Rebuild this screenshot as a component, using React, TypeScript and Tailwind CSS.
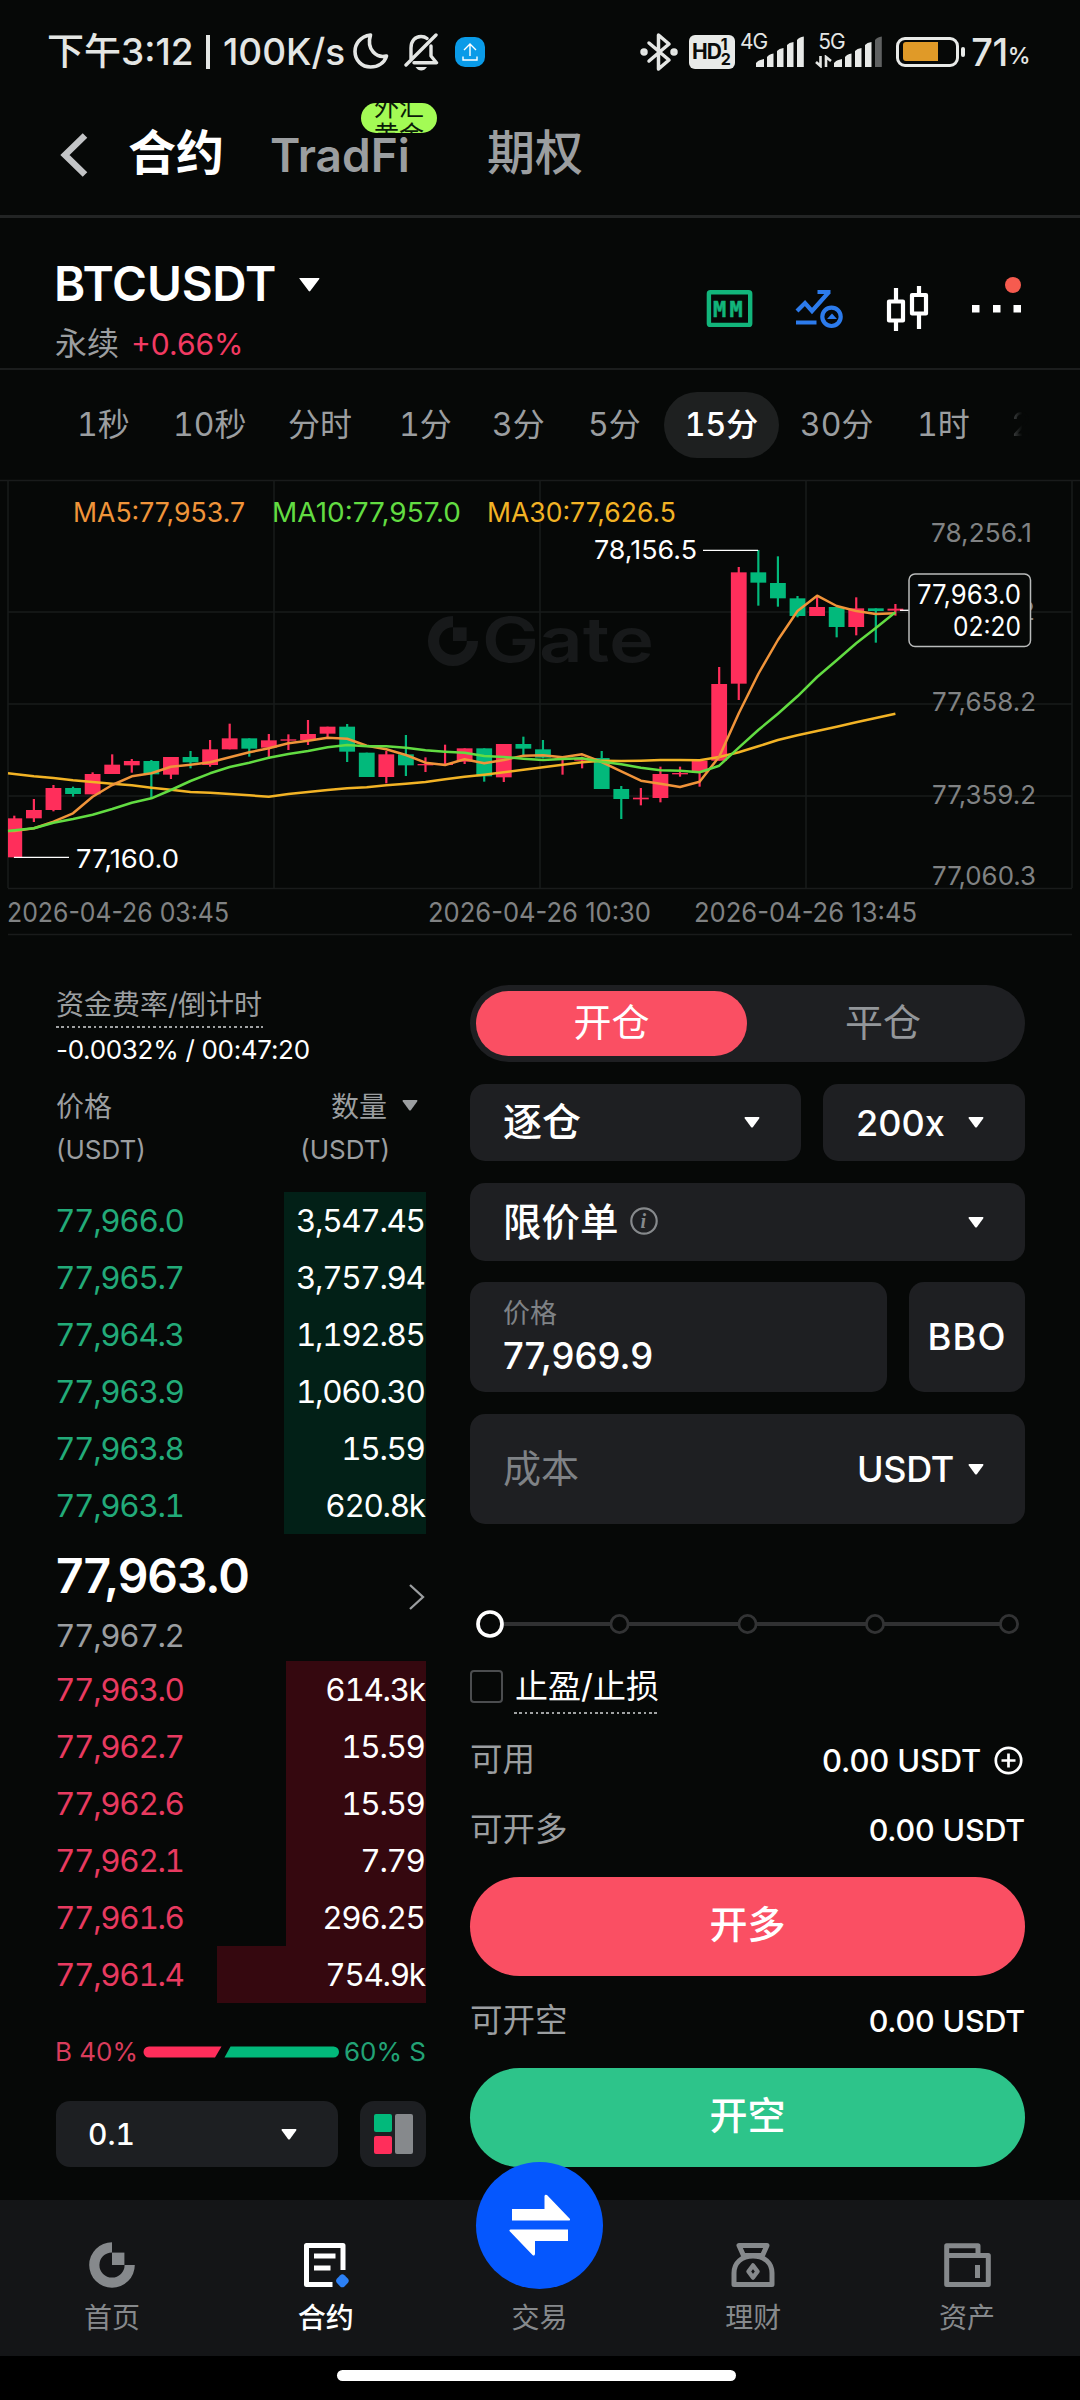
import React from "react";

type Dir = "up" | "down";
type Candle = [high: number, top: number, bottom: number, low: number, dir: Dir];

/* Pixel rows inside the chart, measured in thirds of a pixel. */
const CANDLES: Candle[] = [
  [1037, 1045, 1162, 1162, "up"],
  [987, 1020, 1045, 1056, "up"],
  [945, 954, 1020, 1024, "up"],
  [950, 954, 972, 980, "down"],
  [907, 912, 973, 973, "up"],
  [853, 884, 912, 912, "up"],
  [867, 873, 886, 908, "up"],
  [870, 873, 913, 985, "down"],
  [861, 861, 914, 927, "up"],
  [843, 861, 877, 895, "down"],
  [810, 838, 885, 890, "up"],
  [761, 805, 838, 838, "up"],
  [805, 805, 836, 860, "down"],
  [792, 811, 833, 867, "up"],
  [793, 808, 812, 840, "up"],
  [750, 792, 810, 825, "up"],
  [770, 770, 791, 803, "up"],
  [762, 770, 845, 876, "down"],
  [848, 848, 921, 921, "down"],
  [843, 853, 921, 940, "up"],
  [795, 853, 886, 918, "down"],
  [862, 882, 886, 906, "up"],
  [824, 881, 885, 888, "up"],
  [835, 835, 875, 882, "up"],
  [835, 835, 919, 935, "down"],
  [822, 822, 922, 936, "up"],
  [800, 822, 836, 860, "down"],
  [810, 838, 863, 865, "down"],
  [862, 864, 868, 914, "up"],
  [860, 866, 872, 895, "up"],
  [843, 864, 957, 957, "down"],
  [948, 957, 987, 1047, "down"],
  [954, 983, 988, 1006, "up"],
  [890, 912, 984, 997, "up"],
  [890, 909, 913, 920, "up"],
  [872, 872, 907, 950, "up"],
  [591, 642, 872, 872, "up"],
  [291, 307, 641, 690, "up"],
  [240, 307, 338, 407, "down"],
  [259, 339, 385, 410, "down"],
  [378, 385, 438, 442, "down"],
  [380, 411, 438, 438, "up"],
  [411, 411, 471, 502, "down"],
  [382, 415, 471, 496, "up"],
  [415, 415, 423, 518, "down"],
  [402, 416, 422, 437, "up"],
];

const MA5 = [1083, 1075, 1055, 1030, 980, 945, 919, 910, 890, 884, 877, 862, 847, 835, 820, 812, 803, 806, 827, 838, 855, 878, 885, 868, 880, 870, 857, 856, 862, 853, 876, 904, 932, 941, 951, 935, 860, 730, 612, 510, 423, 377, 408, 423, 432, 430];
const MA10 = [1081, 1075, 1058, 1047, 1034, 1017, 998, 985, 960, 933, 910, 891, 878, 863, 852, 843, 832, 825, 829, 829, 833, 841, 845, 848, 858, 861, 866, 870, 867, 865, 875, 883, 893, 901, 902, 907, 887, 833, 780, 731, 679, 621, 571, 520, 474, 427];
const MA30 = [912, 919, 924, 931, 936, 941, 946, 953, 959, 966, 968, 972, 976, 980, 972, 966, 960, 955, 952, 946, 941, 936, 928, 920, 914, 907, 899, 892, 884, 877, 872, 873, 872, 870, 870, 871, 861, 847, 829, 810, 796, 783, 770, 757, 744, 731];

const cx = (i: number) => 14.3 + 19.58 * i;
const cy = (v: number) => v / 3;
const line = (first: number, data: number[]) =>
  `8,${cy(first).toFixed(1)} ` + data.map((v, i) => `${cx(i).toFixed(1)},${cy(v).toFixed(1)}`).join(" ");

const RED = "#ff2e5b";
const GREEN = "#02b97b";
const SANS = "Inter, 'Noto Sans CJK SC', sans-serif";

function ChartText({ x, y, w, size, fill, children }: { x: number; y: number; w: number; size: number; fill: string; children: string }) {
  return (
    <text x={x} y={y + size * 0.364} fontSize={size} fill={fill} textLength={w} lengthAdjust="spacingAndGlyphs">
      {children}
    </text>
  );
}

function GateMark({ className, r }: { className: string; r: number }) {
  return (
    <svg className={className} width={r * 2} height={r * 2} viewBox="-23 -23 46 46" fill="currentColor">
      <path d="M0-22.8A22.8 22.8 0 1 0 22.8 0H12.6A12.6 12.6 0 1 1 0-12.6Z" />
      <rect x="0" y="-12.4" width="12.4" height="12.4" />
    </svg>
  );
}

function Chart() {
  return (
    <svg width="1080" height="466" viewBox="0 0 1080 466" fontFamily={SANS} className="block">
      <g stroke="#191b1b" strokeWidth="1.5">
        <path d="M0 10.5H1080M8 142H1072M8 234H1072M8 326H1072M8 418.5H1072M8 464.5H1072" />
        <path d="M8 10V418M274 10V418M540 10V418M806 10V418M1072 10V418" />
      </g>
      <g fill="#17191a">
        <g transform="translate(453 171) scale(1.1)">
          <path d="M0-22.8A22.8 22.8 0 1 0 22.8 0H12.6A12.6 12.6 0 1 1 0-12.6Z" />
          <rect x="0" y="-12.4" width="12.4" height="12.4" />
        </g>
        <text x="482" y="192" fontSize="62" fontWeight="600" textLength="172" lengthAdjust="spacingAndGlyphs">
          Gate
        </text>
      </g>
      <ChartText x={931} y={62.5} w={101} size={26} fill="#808283">78,256.1</ChartText>
      <ChartText x={932} y={141} w={103} size={26} fill="#808283">77,957.2</ChartText>
      <ChartText x={932} y={232} w={104} size={26} fill="#808283">77,658.2</ChartText>
      <ChartText x={932} y={324.5} w={104} size={26} fill="#808283">77,359.2</ChartText>
      <ChartText x={932} y={405.5} w={104} size={26} fill="#808283">77,060.3</ChartText>
      {CANDLES.map(([high, top, bottom, low, dir], i) => {
        const x = cx(i);
        const left = Math.max(8, x - 7.9);
        return (
          <g key={i} fill={dir === "up" ? RED : GREEN}>
            <rect x={x - 1.1} y={cy(high)} width="2.2" height={cy(low - high)} />
            <rect x={left} y={cy(top)} width={x + 7.9 - left} height={cy(bottom - top)} />
          </g>
        );
      })}
      <g fill="none" strokeWidth="2.5" strokeLinejoin="round">
        <polyline points={line(910, MA30)} stroke="#f2b325" />
        <polyline points={line(1083, MA5)} stroke="#f0943a" />
        <polyline points={line(1083, MA10)} stroke="#62dc42" />
      </g>
      <path d="M703 80.3H758M14 387.3H69" stroke="#fff" strokeWidth="1.3" />
      <ChartText x={594} y={80} w={103} size={26} fill="#fff">78,156.5</ChartText>
      <ChartText x={76} y={388.5} w={103} size={26} fill="#fff">77,160.0</ChartText>
      <ChartText x={73} y={42.5} w={172} size={26.5} fill="#f0943a">MA5:77,953.7</ChartText>
      <ChartText x={272} y={42.5} w={189} size={26.5} fill="#62dc42">MA10:77,957.0</ChartText>
      <ChartText x={487} y={42.5} w={189} size={26.5} fill="#f2b325">MA30:77,626.5</ChartText>
      <path d="M900 140.3H909" stroke="#fff" strokeWidth="1.3" />
      <rect x="909" y="104" width="121.5" height="72.5" rx="6" fill="#060807" stroke="#b9bbbb" strokeWidth="1.5" />
      <ChartText x={917} y={124.5} w={104} size={26.5} fill="#fff">77,963.0</ChartText>
      <ChartText x={953} y={156.5} w={68} size={26.5} fill="#fff">02:20</ChartText>
      <ChartText x={7} y={442.5} w={222} size={26.5} fill="#808283">2026-04-26 03:45</ChartText>
      <ChartText x={428} y={442.5} w={223} size={26.5} fill="#808283">2026-04-26 10:30</ChartText>
      <ChartText x={694} y={442.5} w={223} size={26.5} fill="#808283">2026-04-26 13:45</ChartText>
    </svg>
  );
}

function Triangle({ className = "" }: { className?: string }) {
  return (
    <svg width="16" height="11" viewBox="0 0 16 11" fill="currentColor" className={"shrink-0 " + className}>
      <path d="M1.2 0H14.8Q16 .3 15.2 1.5L9 10Q8 11 7 10L.8 1.5Q0 .3 1.2 0Z" />
    </svg>
  );
}

function Bars({ gray }: { gray?: boolean }) {
  return (
    <svg width="49" height="31" viewBox="0 0 49 31" fill="#e8eae8">
      <path d="M0 31V27Q2 24 8 23V31ZM11 31V21Q13 18 17.5 17.5V31ZM21 31V15Q23 12.5 27.5 12V31ZM31 31V9Q33 6.5 37.5 6V31Z" />
      <path d="M41 31V4Q43 1 47.8 .5V31Z" fill={gray ? "#5f6161" : "#e8eae8"} />
    </svg>
  );
}

function StatusBar() {
  return (
    <div className="flex h-[103px] items-center pl-[47px] text-[37px] leading-none font-medium text-[#e4e6e4]">
      <span className="w-[156px] whitespace-nowrap">下午3:12</span>
      <span className="ml-[3px] h-[34px] w-[4px] bg-[#e4e6e4]" />
      <span className="ml-[13px] w-[129px] whitespace-nowrap">100K/s</span>
      <svg width="36" height="36" viewBox="0 0 36 36" fill="none" stroke="currentColor" strokeWidth="3.6" strokeLinejoin="round" className="relative -top-px left-px">
        <path d="M17.5 2C7 3.5 2 11 2 18.5C2 27.5 9 34 17.5 34C25 34 31.5 30 33.5 23C24 25.5 13 17 17.5 2Z" />
      </svg>
      <svg width="38" height="38" viewBox="0 0 38 38" fill="none" stroke="currentColor" strokeWidth="3.4" className="ml-[15px]">
        <path d="M3 32L33 2M8 27V15C8 8 12 3.5 18 3.5C20.5 3.5 22.5 4.2 24 5.5M28 13V23L33.5 29.8H11" strokeLinejoin="round" strokeLinecap="round" />
        <path d="M12.5 34H24Q21.5 37.5 18.2 37.5Q15 37.5 12.5 34Z" fill="currentColor" stroke="none" />
      </svg>
      <span className="ml-[14px] flex h-[30px] w-[30px] items-center justify-center rounded-[10px] bg-[#0a9be8]">
        <svg width="18" height="20" viewBox="0 0 18 20" fill="none" stroke="#fff" strokeWidth="1.4">
          <path d="M9 14V2M3 8L9 2L15 8M2 14.5V18H16V14.5" />
        </svg>
      </span>
      <svg width="38" height="40" viewBox="0 0 38 40" fill="none" stroke="currentColor" strokeWidth="3.5" strokeLinejoin="round" strokeLinecap="round" className="ml-[155px]">
        <path d="M9 11L29 28L18.5 37V3L29 12L9 29" />
        <circle cx="4" cy="20" r="2" />
        <circle cx="34" cy="20" r="2" />
      </svg>
      <span className="ml-[11px] flex h-[34px] w-[46px] items-center rounded-[6px] bg-[#e8eae8] pl-[3px] font-bold text-[#0a0c0b]">
        <span className="text-[21px] tracking-[-1px]">HD</span>
        <span className="flex flex-col text-[16px] leading-[15px]">
          <span>1</span>
          <span>2</span>
        </span>
      </span>
      <span className="ml-[5px] self-start pt-[31px] text-[21px] leading-[22px] font-normal tracking-[-1px]">4G</span>
      <span className="-ml-[11px]"><Bars /></span>
      <span className="relative ml-[10px] h-[36px] w-[20px]">
        <span className="absolute -top-[3px] left-[3px] text-[21px] leading-[22px] font-normal tracking-[-1px]">5G</span>
        <svg width="17" height="13" viewBox="0 0 17 13" fill="none" stroke="currentColor" strokeWidth="2.6" className="absolute top-[21px] left-0">
          <path d="M1 7L5.5 11V1M11 12V2L16 6" />
        </svg>
      </span>
      <span className="-ml-px"><Bars gray /></span>
      <span className="ml-[13px] flex h-[30px] w-[63px] items-center rounded-[9px] border-[3px] border-[#e8eae8] pl-[4px]">
        <span className="h-[19px] w-[35px] rounded-l-[3px] bg-[#e09a28]" />
      </span>
      <span className="ml-[2px] h-[10px] w-[4px] rounded-[2px] bg-[#e8eae8]" />
      <span className="ml-[6px] text-[38px] tracking-[-0.5px]">71</span>
      <span className="self-start pt-[44px] text-[23px] leading-[24px]">%</span>
    </div>
  );
}

function TopNav() {
  return (
    <div className="flex h-[115px] items-center border-b-[3px] border-[#222424] pb-[12px] pl-[60px] text-[47px] leading-none font-medium text-[#9b9ea0]">
      <svg width="28" height="44" viewBox="0 0 28 44" fill="none" stroke="#c2c4c6" strokeWidth="6.5" className="relative top-[2px]">
        <path d="M25 2.5L5 22L25 41.5" />
      </svg>
      <span className="ml-[40px] w-[142px] text-[48px] font-bold text-white">合约</span>
      <span className="relative top-[2px] w-[217px] text-[46px] font-semibold">
        TradFi
        <span className="absolute -top-[29px] left-[91px] h-[30px] w-[76px] overflow-hidden rounded-[15px] bg-[#a3fb55] text-center text-[25px] leading-[28px] font-normal text-[#0b1c08]">
          <span className="absolute -top-[10px] left-0 w-full">外汇<br />黄金</span>
        </span>
      </span>
      <span className="text-[48px]">期权</span>
    </div>
  );
}

function HeaderIcons() {
  return (
    <svg width="346" height="60" viewBox="0 0 346 60" fill="none" fontFamily="'DejaVu Sans Mono', monospace">
      <rect x="18.9" y="14.2" width="41.3" height="32.7" rx="1.5" stroke="#12b57b" strokeWidth="4.4" />
      <text x="23" y="38.5" fontSize="22" fontWeight="700" letterSpacing="3.2" fill="#12b57b" stroke="#12b57b" strokeWidth=".5">MM</text>
      <g stroke="#2c7bec" strokeWidth="4.2">
        <path d="M107 33L115 25L122 33L138.5 14.5M127.500 14H140.500M106 44.500H126.500" />
        <circle cx="141.5" cy="38.8" r="9.2" />
        <path d="M137 41H147L142 35.5Z" fill="#2c7bec" stroke="none" />
      </g>
      <g stroke="#fff" strokeWidth="4.200" strokeLinejoin="round">
        <path d="M199 23.5H213V42.5H199ZM222 17H236V35.5H222Z" />
        <path d="M206 10V23M206 43V53M229 8V17M229 36V51" />
      </g>
      <path d="M282 27h7.5v7.5h-7.5zM303 27h7.5v7.5h-7.5zM323.5 27h7.5v7.5h-7.5z" fill="#fff" />
    </svg>
  );
}

function SymbolHeader() {
  return (
    <div className="relative flex h-[152px] justify-between border-b-2 border-[#1b1d1d] pr-[44px] pl-[54px] leading-none">
      <div className="flex flex-col pt-[42px]">
        <div className="flex h-[48px] items-center text-[47.5px] font-semibold tracking-[-0.2px] text-white">
          BTCUSDT
          <svg width="21" height="14" viewBox="0 0 22 15" fill="currentColor" className="relative top-px ml-[23px]">
            <path d="M0 1Q0 0 1 0H21Q22 0 21.5 1L11.8 14Q11 15 10.2 14L.5 1Z" />
          </svg>
        </div>
        <div className="mt-[18px] flex h-[36px] items-center gap-[12px] pl-px text-[32px] text-[#9b9ea0]">
          永续
          <span className="text-[30px] text-[#f23a62]">+0.66%</span>
        </div>
      </div>
      <div className="pt-[60px]">
        <HeaderIcons />
      </div>
      <span className="absolute top-[59px] left-[1005px] h-[16px] w-[16px] rounded-full bg-[#f65b4f]" />
    </div>
  );
}

function Intervals() {
  return (
    <div className="flex h-[100px] items-center pt-[10px] pl-[77px] text-[32px] leading-none whitespace-nowrap text-[#9b9ea0] tabular-nums">
      <span className="w-[96px]">1秒</span>
      <span className="w-[115px]">10秒</span>
      <span className="w-[111px]">分时</span>
      <span className="w-[93px]">1分</span>
      <span className="w-[96px]">3分</span>
      <span className="w-[76px]">5分</span>
      <span className="flex h-[66px] w-[115px] items-center justify-center rounded-full bg-[#1e2020] font-medium text-white">15分</span>
      <span className="w-[138px] pl-[21px]">30分</span>
      <span className="w-[94px]">1时</span>
      <span className="bg-gradient-to-r from-[#4a4c4d] to-[#060807] to-55% bg-clip-text text-transparent">2</span>
    </div>
  );
}

const ASKS = [
  ["77,966.0", "3,547.45"],
  ["77,965.7", "3,757.94"],
  ["77,964.3", "1,192.85"],
  ["77,963.9", "1,060.30"],
  ["77,963.8", "15.59"],
  ["77,963.1", "620.8k"],
];
const BIDS = [
  ["77,963.0", "614.3k"],
  ["77,962.7", "15.59"],
  ["77,962.6", "15.59"],
  ["77,962.1", "7.79"],
  ["77,961.6", "296.25"],
  ["77,961.4", "754.9k"],
];

function OrderBook() {
  return (
    <div className="ml-[55px] flex w-[371px] flex-col pt-[38px] leading-none whitespace-nowrap text-[#9b9ea0]">
      <div className="flex h-[41px] items-center pl-px text-[28px]">资金费率/倒计时</div>
      <div className="mt-px ml-px h-[2px] w-[207px] bg-[repeating-linear-gradient(90deg,#a0a2a3_0_2.7px,transparent_2.7px_5.4px)]" />
      <div className="flex h-[44px] items-center pl-px text-[26px] tracking-[-0.3px] text-white">-0.0032% / 00:47:20</div>
      <div className="mt-[14px] flex h-[42px] items-center justify-between pl-px text-[28px]">
        <span>价格</span>
        <span className="flex items-center pr-[8px]">
          数量
          <Triangle className="relative -top-[2px] ml-[15px]" />
        </span>
      </div>
      <div className="flex h-[43px] items-center justify-between pr-[36px] pl-px text-[26px]">
        <span>(USDT)</span>
        <span>(USDT)</span>
      </div>
      <div className="mt-[21px] flex flex-col text-[31.5px] tracking-[-1.350px] tabular-nums">
        {ASKS.map(([p, q]) => (
          <div key={p} className="flex h-[57px] justify-between">
            <span className="flex items-center text-[#22ab79]">{p}</span>
            <span className="flex w-[142px] items-center justify-end bg-[#022017] pr-[1.300px] text-white">{q}</span>
          </div>
        ))}
      </div>
      <div className="flex h-[127px] items-center justify-between">
        <div className="flex h-full flex-col">
          <span className="flex h-[84px] items-center pl-px text-[48px] font-semibold tracking-[-1.100px] text-white">77,963.0</span>
          <span className="flex h-[36px] items-center text-[31.5px] tracking-[-1.350px] tabular-nums">77,967.2</span>
        </div>
        <svg width="18" height="28" viewBox="0 0 18 28" fill="none" stroke="currentColor" strokeWidth="2.3" className="relative -top-px">
          <path d="M2 2L15 14L2 26" />
        </svg>
      </div>
      <div className="flex flex-col text-[31.5px] tracking-[-1.350px] tabular-nums">
        {BIDS.map(([p, q], i) => (
          <div key={p} className="flex h-[57px] justify-between">
            <span className="flex items-center text-[#e83a60]">{p}</span>
            <span className={(i === 5 ? "w-[209px]" : "w-[140px]") + " flex items-center justify-end bg-[#35080f] pr-[1.300px] text-white"}>{q}</span>
          </div>
        ))}
      </div>
      <div className="flex h-[97px] items-center justify-between text-[26px]">
        <span className="text-[#d93c5c]">B 40%</span>
        <svg width="196" height="12" viewBox="0 0 196 12">
          <path d="M6 .5H78.5L72 11.5H6A5.5 5.5 0 0 1 6 .5Z" fill={RED} />
          <path d="M87.5 .5H190.5A5.5 5.5 0 0 1 190.5 11.5H81.5Z" fill={GREEN} />
        </svg>
        <span className="text-[#22a376]">60% S</span>
      </div>
      <div className="mt-px flex h-[66px] justify-between pl-px text-white">
        <div className="flex w-[282px] items-center justify-between rounded-[14px] bg-[#1d1f22] pr-[41px] pl-[32px] text-[30px] font-medium tabular-nums">
          0.1
          <Triangle />
        </div>
        <div className="flex w-[66px] items-center justify-center gap-[3px] rounded-[14px] bg-[#1d1f22]">
          <div className="flex flex-col gap-[4px]">
            <span className="h-[18px] w-[18px] rounded-[2px] bg-[#02b97b]" />
            <span className="h-[18px] w-[18px] rounded-[2px] bg-[#ff2e5b]" />
          </div>
          <span className="h-[40px] w-[18px] rounded-[2px] bg-[#86898c]" />
        </div>
      </div>
    </div>
  );
}

function BalanceRow({ label, children }: { label: string; children: React.ReactNode }) {
  return (
    <div className="flex h-[40px] items-center justify-between text-[32.5px] text-[#9b9ea0]">
      <span>{label}</span>
      <span className="flex items-center text-[30.5px] font-medium tracking-[-0.2px] text-white">{children}</span>
    </div>
  );
}

function OrderForm() {
  return (
    <div className="ml-[44px] flex w-[555px] flex-col pt-[39px] leading-none whitespace-nowrap text-white">
      <div className="flex h-[77px] rounded-full bg-[#1e1f22] p-[6px] text-[38px]">
        <span className="flex w-[271px] items-center justify-center rounded-full bg-[#fa4f63] pb-[3px]">开仓</span>
        <span className="flex flex-1 items-center justify-center pb-[3px] text-[#93969a]">平仓</span>
      </div>
      <div className="mt-[22px] flex h-[77px] justify-between font-medium">
        <div className="flex w-[331px] items-center justify-between rounded-[15px] bg-[#1e1f22] pr-[41px] pl-[33px] text-[39px]">
          <span className="pb-[2px]">逐仓</span>
          <Triangle />
        </div>
        <div className="flex w-[202px] items-center justify-between rounded-[15px] bg-[#1e1f22] pr-[41px] pl-[33px] text-[36px]">
          200x
          <Triangle />
        </div>
      </div>
      <div className="mt-[22px] flex h-[78px] items-center rounded-[15px] bg-[#1e1f22] pr-[41px] pl-[33px] text-[38.5px] font-medium">
        限价单
        <svg width="28" height="28" viewBox="0 0 28 28" fill="none" className="relative -top-px ml-[11px]">
          <circle cx="14" cy="14" r="12.7" stroke="#86898c" strokeWidth="2.2" />
          <text x="10.5" y="21" fontSize="20" fontStyle="italic" fontFamily="'Liberation Serif', serif" fontWeight="700" fill="#86898c">i</text>
        </svg>
        <Triangle className="ml-auto" />
      </div>
      <div className="mt-[21px] flex h-[110px] justify-between font-medium">
        <div className="flex w-[417px] flex-col rounded-[15px] bg-[#1e1f22] pt-[16px] pl-[33px] text-[36.5px]">
          <span className="flex h-[30px] items-center text-[27px] font-normal text-[#7f8286]">价格</span>
          <span className="mt-[9px] flex h-[38px] items-center">77,969.9</span>
        </div>
        <div className="flex w-[116px] items-center justify-center rounded-[15px] bg-[#1e1f22] text-[36.5px] tracking-[1px]">BBO</div>
      </div>
      <div className="mt-[22px] flex h-[110px] items-center rounded-[15px] bg-[#1e1f22] pr-[41px] pl-[33px] text-[38px]">
        <span className="pb-[2px] text-[#7f8286]">成本</span>
        <span className="ml-auto text-[36px] font-medium tracking-[-0.3px]">USDT</span>
        <Triangle className="ml-[14px]" />
      </div>
      <svg width="555" height="30" viewBox="0 0 555 30" fill="#060807" className="mt-[85px]">
        <path d="M20 15H539" stroke="#303132" strokeWidth="4" />
        <g stroke="#323334" strokeWidth="2.8">
          <circle cx="149.5" cy="15" r="8.6" />
          <circle cx="277.5" cy="15" r="8.6" />
          <circle cx="405" cy="15" r="8.6" />
          <circle cx="539" cy="15" r="8.6" />
        </g>
        <circle cx="20" cy="15" r="12" stroke="#fff" strokeWidth="3.7" />
      </svg>
      <div className="mt-[31px] flex h-[33px] items-center">
        <span className="h-[33px] w-[33px] rounded-[4px] border-[2.5px] border-[#4b4d4f]" />
        <span className="relative ml-[11px] flex h-[33px] w-[144px] items-center pl-px text-[33px]">
          止盈/止损
          <span className="absolute top-[42px] left-0 h-[2px] w-[144px] bg-[repeating-linear-gradient(90deg,#a0a2a3_0_2.7px,transparent_2.7px_5.4px)]" />
        </span>
      </div>
      <div className="mt-[37px]">
        <BalanceRow label="可用">
          <span className="text-[31px]">0.00 USDT</span>
          <svg width="29" height="29" viewBox="0 0 29 29" fill="none" stroke="#fff" strokeWidth="2.7" className="mr-[2px] ml-[13px]">
            <circle cx="14.5" cy="14.5" r="12.7" />
            <path d="M7.5 14.5H21.5M14.5 7.5V21.5" />
          </svg>
        </BalanceRow>
      </div>
      <div className="mt-[30px]"><BalanceRow label="可开多">0.00 USDT</BalanceRow></div>
      <div className="mt-[27px] flex h-[99px] items-center justify-center rounded-full bg-[#fa4f63] pb-[6px] text-[38px] font-medium">开多</div>
      <div className="mt-[25px]"><BalanceRow label="可开空">0.00 USDT</BalanceRow></div>
      <div className="mt-[27px] flex h-[99px] items-center justify-center rounded-full bg-[#2dc48a] pb-[6px] text-[38px] font-medium">开空</div>
    </div>
  );
}

function Tab({ label, active, children }: { label: string; active?: boolean; children?: React.ReactNode }) {
  return (
    <div className={(active ? "font-medium text-white" : "text-[#86898c]") + " flex flex-1 flex-col items-center"}>
      <div className="flex h-[130px] items-center">{children}</div>
      <span className="-mt-[26px] text-[28px] leading-[28px]">{label}</span>
    </div>
  );
}

function BottomNav() {
  return (
    <div className="relative flex h-[156px] bg-[#141517] pr-[6px] pl-[5px]">
      <Tab label="首页">
        <GateMark r={23} className="" />
      </Tab>
      <Tab label="合约" active>
        <svg width="48" height="48" viewBox="0 0 48 48" fill="none" stroke="currentColor" strokeWidth="5" className="relative -left-px">
          <path d="M31.5 43.5H5.5V4.5H42V29" strokeLinejoin="round" />
          <path d="M13 15H34.5M13 27H29.5" />
          <path d="M41.3 33.2Q42.5 33.2 43.5 34.2L47 37.8Q48.5 39.8 47 41.8L43.5 45.5Q41.3 47.2 39.2 45.5L35.8 41.8Q34.3 39.8 35.8 37.8L39.2 34.2Q40.2 33.2 41.3 33.2Z" fill="#2c80f6" stroke="none" />
        </svg>
      </Tab>
      <Tab label="交易" />
      <Tab label="理财">
        <svg width="46" height="48" viewBox="0 0 46 48" fill="none" stroke="currentColor" strokeWidth="5" strokeLinejoin="round">
          <path d="M9 4.5H37L32.5 14.5H13.5Z" />
          <path d="M4 43.5V32C4 22 11.5 15 23 15S42 22 42 32V43.5Z" />
          <path d="M23 24.5L27.5 30.5L23 36.5L18.5 30.5Z" strokeWidth="4.5" />
        </svg>
      </Tab>
      <Tab label="资产">
        <svg width="47" height="46" viewBox="0 0 47 46" fill="none" stroke="currentColor" strokeWidth="5" strokeLinejoin="round">
          <path d="M2.7 3.7H34V13.5H44.3V42.5H2.7ZM2.7 13.5H34M33.5 23V36" />
        </svg>
      </Tab>
      <span className="absolute -top-[38px] left-[476px] flex h-[127px] w-[127px] items-center justify-center rounded-full bg-[#0557fe]">
        <svg width="62" height="63" viewBox="0 0 62 63" fill="#fff">
          <path d="M3 15H35.5V2Q36 0 38 1L61 25Q61.5 26.5 60 26.5H3Z" />
          <path d="M59 47H26V60Q25.5 62.5 23.5 61L.5 37Q0 35.5 1.5 35.5H59Z" />
        </svg>
      </span>
    </div>
  );
}

export default function App() {
  return (
    <div className="flex h-[2400px] w-[1080px] flex-col overflow-hidden bg-[#060807] font-[Inter,'Noto_Sans_CJK_SC',sans-serif]">
      <StatusBar />
      <TopNav />
      <SymbolHeader />
      <Intervals />
      <Chart />
      <div className="mt-[10px] flex h-[1254px]">
        <OrderBook />
        <OrderForm />
      </div>
      <BottomNav />
      <div className="flex h-[44px] items-center justify-center bg-black pr-[7px] pb-[6px]">
        <span className="h-[11px] w-[399px] rounded-full bg-white" />
      </div>
    </div>
  );
}
